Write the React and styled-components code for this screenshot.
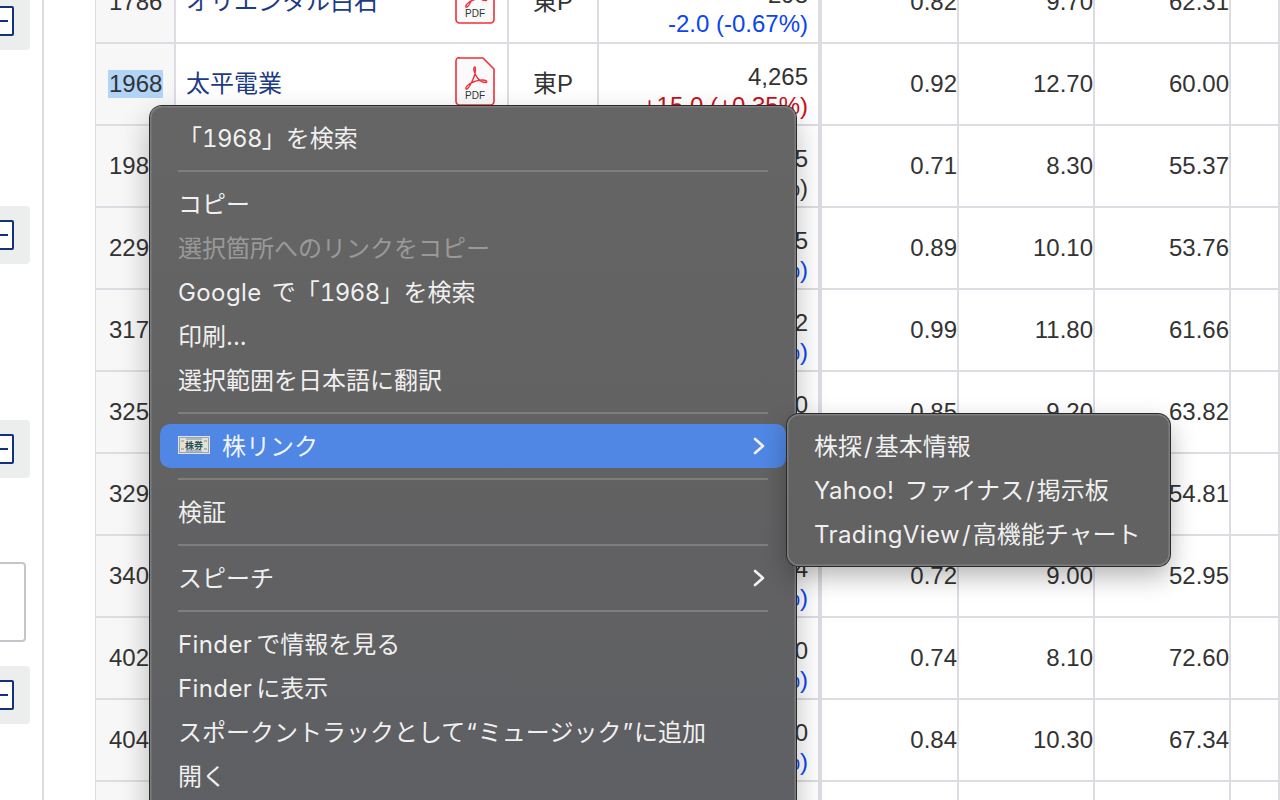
import React from "react";
import styled, { createGlobalStyle } from "styled-components";

const rows = [
  { code: "1786", name: "オリエンタル白石", price: "298", change: "-2.0 (-0.67%)", trend: "down", pbr: "0.82", per: "9.70", rate: "62.31" },
  { code: "1968", name: "太平電業", price: "4,265", change: "+15.0 (+0.35%)", trend: "up", pbr: "0.92", per: "12.70", rate: "60.00", selected: true },
  { code: "1980", name: "ダイダン", price: "2,135", change: "0.0 (0.00%)", trend: "flat", pbr: "0.71", per: "8.30", rate: "55.37" },
  { code: "2297", name: "東亜バルブ", price: "1,845", change: "-6.0 (-0.32%)", trend: "down", pbr: "0.89", per: "10.10", rate: "53.76" },
  { code: "3178", name: "チムニー", price: "1,312", change: "-3.0 (-0.23%)", trend: "down", pbr: "0.99", per: "11.80", rate: "61.66" },
  { code: "3254", name: "プレサンス", price: "1,640", change: "-4.0 (-0.24%)", trend: "down", pbr: "0.85", per: "9.20", rate: "63.82" },
  { code: "3298", name: "インベスコ", price: "1,250", change: "-2.0 (-0.16%)", trend: "down", pbr: "0.78", per: "8.90", rate: "54.81" },
  { code: "3401", name: "帝人", price: "1,374", change: "-8.0 (-0.58%)", trend: "down", pbr: "0.72", per: "9.00", rate: "52.95" },
  { code: "4023", name: "クレハ", price: "7,820", change: "-30.0 (-0.38%)", trend: "down", pbr: "0.74", per: "8.10", rate: "72.60" },
  { code: "4041", name: "日本曹達", price: "4,930", change: "-20.0 (-0.40%)", trend: "down", pbr: "0.84", per: "10.30", rate: "67.34" },
  { code: "4042", name: "東ソー", price: "1,780", change: "-5.0 (-0.28%)", trend: "down", pbr: "0.80", per: "9.50", rate: "60.12" },
];

const trendColors = { up: "#c90f1c", down: "#0a46f0", flat: "#333" };

const GlobalStyle = createGlobalStyle`
  html, body {
    margin: 0;
    height: 800px;
    overflow: hidden;
    background: #fff;
  }
  * {
    box-sizing: border-box;
  }
`;

const PdfIcon = () => (
  <svg width="40" height="49" viewBox="0 0 40 49" fill="none">
    <path
      d="M4.500 1h23.500l11 11v32.500a3.500 3.500 0 0 1-3.500 3.500h-31a3.500 3.500 0 0 1-3.500-3.500v-40.500a3.500 3.500 0 0 1 3.500-3.500z"
      fill="#fafafa"
      stroke="#f0303a"
      strokeWidth="1.600"
    />
    <path
      d="M19.500 10.500c-2 .5.500 7 3 10.500 2.500 3 6 4.500 8 4.500 2 0 1.500-2-1-2.300-4-.5-10 1-14.500 3.300-2.500 1.500-5 4.500-4 5.500 1.200 1 3.500-2.500 5.500-6.500 1.800-3.500 4-9.500 4-13 0-1.500-.2-2.500-1-2.500z"
      stroke="#f0303a"
      strokeWidth="1.400"
    />
    <PdfLabel x="20" y="42" textAnchor="middle">PDF</PdfLabel>
  </svg>
);

const StockIcon = () => (
  <StockSvg width="32" height="18" viewBox="0 0 32 18">
    <rect width="32" height="18" fill="#e7e2d0" />
    <rect x="1.500" y="1.500" width="29" height="15" fill="none" stroke="#8fa6c4" strokeWidth="1" />
    <path d="M3 5h3M3 13h3M26 5h3M26 13h3M8 3h16M8 15h16" stroke="#6f8db5" strokeWidth="1" />
    <StockLabel x="16" y="12.500" textAnchor="middle">株券</StockLabel>
  </StockSvg>
);

const Chevron = () => (
  <ChevronSvg width="14" height="20" viewBox="0 0 14 20" fill="none">
    <path d="M3 3l8 7-8 7" stroke="#f2f2f2" strokeWidth="2.600" strokeLinecap="round" strokeLinejoin="round" />
  </ChevronSvg>
);

const ToggleButton = ({ $top }) => (
  <SideButton $top={$top}>
    <ToggleBox />
  </SideButton>
);

export default function App() {
  return (
    <>
      <GlobalStyle />
      <Page>
        <Sidebar>
          <SideStack>
            <ToggleButton $top={-8} />
            <ToggleButton $top={156} />
            <ToggleButton $top={156} />
            <SideInput />
            <ToggleButton $top={24} />
          </SideStack>
        </Sidebar>
        <Table>
          {rows.map((row) => (
            <Row key={row.code}>
              <CodeCell>
                <CodeText $selected={row.selected}>{row.code}</CodeText>
              </CodeCell>
              <NameCell>
                <NameLink>{row.name}</NameLink>
                <PdfIcon />
              </NameCell>
              <MarketCell>東P</MarketCell>
              <PriceCell>
                <div>{row.price}</div>
                <Change $trend={row.trend}>{row.change}</Change>
              </PriceCell>
              <NumCell>{row.pbr}</NumCell>
              <NumCell>{row.per}</NumCell>
              <NumCell>{row.rate}</NumCell>
              <NumCell />
            </Row>
          ))}
        </Table>

        <Menu>
          <MenuItem><span>「<Digits>1968</Digits>」を検索</span></MenuItem>
          <Separator />
          <MenuItem>コピー</MenuItem>
          <MenuItem $disabled>選択箇所へのリンクをコピー</MenuItem>
          <MenuItem><span><Latin>Google </Latin>で「<Digits>1968</Digits>」を検索</span></MenuItem>
          <MenuItem>印刷...</MenuItem>
          <MenuItem>選択範囲を日本語に翻訳</MenuItem>
          <Separator />
          <MenuItem $active>
            <StockIcon />
            <ActiveLabel>株リンク</ActiveLabel>
            <Chevron />
          </MenuItem>
          <Separator />
          <MenuItem>検証</MenuItem>
          <Separator />
          <MenuItem>
            スピーチ
            <Chevron />
          </MenuItem>
          <Separator />
          <MenuItem><span><AppName>Finder</AppName>で情報を見る</span></MenuItem>
          <MenuItem><span><AppName>Finder</AppName>に表示</span></MenuItem>
          <MenuItem><span>スポークントラックとして<Quote>“</Quote>ミュージック<Quote>”</Quote>に追加</span></MenuItem>
          <MenuItem>開く</MenuItem>
        </Menu>

        <SubMenu>
          <SubItem>株探<Slash>/</Slash>基本情報</SubItem>
          <SubItem><Latin>Yahoo! </Latin>ファイナス<Slash>/</Slash>掲示板</SubItem>
          <SubItem><Latin>TradingView</Latin><Slash>/</Slash>高機能チャート</SubItem>
        </SubMenu>
      </Page>
    </>
  );
}

const Page = styled.div`
  position: relative;
  display: flex;
  width: 1280px;
  height: 800px;
  overflow: hidden;
  background: #fff;
  color: #333;
  font-family: "Liberation Sans", "Noto Sans CJK JP", sans-serif;
  font-size: 24px;
`;

const Sidebar = styled.aside`
  flex: 0 0 44px;
  height: 800px;
  margin-right: 51px;
  border-right: 2px solid #dcdce2;
`;

const SideStack = styled.div`
  display: flex;
  flex-direction: column;
  align-items: flex-start;
  margin-left: -30px;
`;

const SideButton = styled.div`
  display: flex;
  align-items: center;
  justify-content: center;
  width: 60px;
  height: 58px;
  margin-top: ${({ $top }) => $top}px;
  background: #eceeee;
  border-radius: 4px;
`;

const ToggleBox = styled.div`
  display: flex;
  align-items: center;
  justify-content: center;
  width: 28px;
  height: 30px;
  border: 2px solid #12317f;
  border-radius: 2px;
  background: #fff;

  &::before {
    content: "";
    width: 16px;
    height: 2px;
    background: #12317f;
  }
`;

const SideInput = styled.div`
  width: 56px;
  height: 80px;
  margin-top: 84px;
  border: 2px solid #c2c6cb;
  border-radius: 4px;
  background: #fff;
`;

const Table = styled.div`
  flex: 0 0 1185px;
  margin-top: -38px;
  border-left: 1px solid #dcdce2;
`;

const Row = styled.div`
  display: grid;
  grid-template-columns: 80px 333px 90px 223px 137px 136px 136px 49px;
  height: 82px;
  border-bottom: 2px solid #dcdce2;
`;

const Cell = styled.div`
  display: flex;
  align-items: center;
  border-right: 2px solid #dcdce2;
`;

const CodeCell = styled(Cell)`
  padding-left: 12px;
  background: #f7f7f7;
`;

const CodeText = styled.span`
  padding: 0 1px;
  background: ${({ $selected }) => ($selected ? "#b2d4f8" : "transparent")};
  line-height: 28px;
`;

const NameCell = styled(Cell)`
  justify-content: space-between;
  padding: 0 12px 6px 10px;
`;

const NameLink = styled.span`
  color: #1c3a86;
`;

const PdfLabel = styled.text`
  font-family: "Liberation Sans", sans-serif;
  font-size: 10px;
  fill: #333;
`;

const MarketCell = styled(Cell)`
  justify-content: center;
  padding-bottom: 6px;
`;

const PriceCell = styled(Cell)`
  flex-direction: column;
  align-items: flex-end;
  padding: 18px 10px 0 0;
  border-right-width: 4px;
  line-height: 29px;
`;

const Change = styled.div`
  color: ${({ $trend }) => trendColors[$trend]};
`;

const NumCell = styled(Cell)`
  justify-content: flex-end;
`;

const Menu = styled.div`
  position: absolute;
  top: 106px;
  left: 150px;
  width: 646px;
  height: 720px;
  padding: 10px;
  border-radius: 12px;
  background: linear-gradient(180deg, #666565 0%, #626263 50%, #5e5f63 100%);
  box-shadow: 0 0 0 1px #2a2a2a, inset 0 0 0 1.500px #7d7d7d, 0 12px 30px rgba(0, 0, 0, 0.28);
  font-family: "Inter", "Noto Sans CJK JP", sans-serif;
`;

const MenuItem = styled.div`
  display: flex;
  align-items: center;
  justify-content: space-between;
  width: 626px;
  height: 44px;
  padding: 0 20px 4px 18px;
  border-radius: 10px;
  background: ${({ $active }) => ($active ? "#5087e4" : "transparent")};
  color: ${({ $disabled }) => ($disabled ? "rgba(255, 255, 255, 0.36)" : "rgba(255, 255, 255, 0.92)")};
  white-space: nowrap;
`;

const Latin = styled.span`
  letter-spacing: 0.4px;
  word-spacing: 3px;
`;

const Digits = styled.span`
  letter-spacing: -0.6px;
  font-variant-numeric: tabular-nums;
`;

const AppName = styled(Latin)`
  margin-right: 4px;
`;

const Slash = styled.span`
  margin: 0 2px;
`;

const Quote = styled.span`
  margin: 0 1px;
`;

const ActiveLabel = styled.span`
  flex: 1;
  margin-left: 12px;
`;

const StockSvg = styled.svg`
  flex-shrink: 0;
  margin-top: 2px;
`;

const StockLabel = styled.text`
  font-family: "Noto Sans CJK JP", sans-serif;
  font-size: 9px;
  font-weight: 700;
  fill: #24505c;
`;

const ChevronSvg = styled.svg`
  flex-shrink: 0;
  margin-top: 4px;
`;

const Separator = styled.div`
  height: 2px;
  margin: 10px 18px;
  background: #7e7e7e;
`;

const SubMenu = styled.div`
  position: absolute;
  top: 414px;
  left: 787px;
  width: 383px;
  height: 152px;
  padding: 11px 0 0 27px;
  border-radius: 12px;
  background: #626262;
  box-shadow: 0 0 0 1px #2a2a2a, inset 0 0 0 1.500px #7d7d7d, 0 10px 26px rgba(0, 0, 0, 0.3);
  font-family: "Inter", "Noto Sans CJK JP", sans-serif;
  color: rgba(255, 255, 255, 0.92);
`;

const SubItem = styled.div`
  height: 44px;
  line-height: 44px;
  white-space: nowrap;
`;
